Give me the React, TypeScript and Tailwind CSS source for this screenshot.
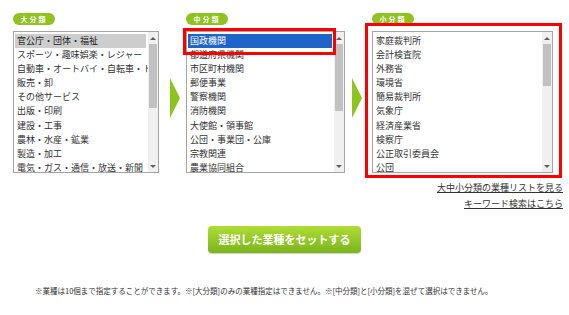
import React from 'react';

const big = [
  '官公庁・団体・福祉',
  'スポーツ・趣味娯楽・レジャー',
  '自動車・オートバイ・自転車・トラック',
  '販売・卸',
  'その他サービス',
  '出版・印刷',
  '建設・工事',
  '農林・水産・鉱業',
  '製造・加工',
  '電気・ガス・通信・放送・新聞',
];

const mid = [
  '国政機関',
  '都道府県機関',
  '市区町村機関',
  '郵便事業',
  '警察機関',
  '消防機関',
  '大使館・領事館',
  '公団・事業団・公庫',
  '宗教関連',
  '農業協同組合',
];

const small = [
  '家庭裁判所',
  '会計検査院',
  '外務省',
  '環境省',
  '簡易裁判所',
  '気象庁',
  '経済産業省',
  '検察庁',
  '公正取引委員会',
  '公団',
];

function Pill({ label }: { label: string }) {
  return (
    <div className="w-[42px] h-[12px] rounded-full bg-[#8fc31f] text-white text-[7px] font-bold tracking-[2px] flex items-center justify-center">
      {label}
    </div>
  );
}

function ScrollBar({ thumb }: { thumb: number }) {
  return (
    <div className="w-[10px] h-full flex flex-col bg-[#f0f0f0]">
      <div className="h-[12px] flex items-center justify-center">
        <div className="border-x-[3px] border-x-transparent border-b-[3px] border-b-[#606060]" />
      </div>
      <div className="mx-[1px] bg-[#c1c1c1]" style={{ height: thumb }} />
      <div className="flex-1" />
      <div className="h-[12px] flex items-center justify-center">
        <div className="border-x-[3px] border-x-transparent border-t-[3px] border-t-[#606060]" />
      </div>
    </div>
  );
}

function ListBox({
  label,
  items,
  width,
  thumb,
  selected,
}: {
  label: string;
  items: string[];
  width: number;
  thumb: number;
  selected?: 'grey' | 'blue';
}) {
  return (
    <div className="flex flex-col gap-[6px]">
      <Pill label={label} />
      <div
        className="h-[142px] border border-[#a5a5a5] bg-white flex"
        style={{ width }}
      >
        <div className="flex-1 min-w-0 overflow-hidden pt-[2px] pl-[1px] pr-[2px]">
          {items.map((item, i) => (
            <div
              key={item}
              className={
                'h-[14.1px] leading-[14px] px-[2px] whitespace-nowrap ' +
                (i === 0 && selected === 'grey'
                  ? 'bg-[#cdcdcd] text-[#222]'
                  : i === 0 && selected === 'blue'
                    ? 'bg-[#1f64c8] text-white'
                    : 'text-[#333]')
              }
            >
              {item}
            </div>
          ))}
        </div>
        <ScrollBar thumb={thumb} />
      </div>
    </div>
  );
}

function Arrow() {
  return (
    <div className="self-start mt-[65px] border-l-[10px] border-l-[#8fc31f] border-y-[20px] border-y-transparent" />
  );
}

export default function App() {
  return (
    <div
      className="relative w-[569px] h-[315px] bg-white text-[9px] text-[#333]"
      style={{ fontFamily: '"Noto Sans CJK JP", "Noto Sans", sans-serif' }}
    >
      <div className="flex items-start pl-[13px] pt-[13px]">
        <ListBox label="大分類" items={big} width={146} thumb={64} selected="grey" />
        <div className="ml-[11px] mr-[6px] flex">
          <Arrow />
        </div>
        <ListBox label="中分類" items={mid} width={159} thumb={67} selected="blue" />
        <div className="ml-[7px] mr-[10px] flex">
          <Arrow />
        </div>
        <ListBox label="小分類" items={small} width={181} thumb={42} />
      </div>

      <div className="flex flex-col items-end pr-[6px] mt-[9px] gap-[4px] leading-[12px]">
        <a className="underline text-[#333]">大中小分類の業種リストを見る</a>
        <a className="underline text-[#333]">キーワード検索はこちら</a>
      </div>

      <div className="flex justify-center mt-[16px]">
        <button className="w-[153px] h-[27px] rounded-[4px] bg-gradient-to-b from-[#b0dc35] to-[#7ab51b] text-white text-[11px] font-bold shadow-[0_1px_1px_rgba(0,0,0,0.2)]">
          選択した業種をセットする
        </button>
      </div>

      <div className="pl-[35px] mt-[33px] text-[7.5px] leading-[10px] text-[#333] whitespace-nowrap">
        ※業種は10個まで指定することができます。※[大分類]のみの業種指定はできません。※[中分類]と[小分類]を混ぜて選択はできません。
      </div>

      <div className="absolute left-[183px] top-[28px] w-[153px] h-[27px] border-[3px] border-[#f00]" />
      <div className="absolute left-[365px] top-[23px] w-[197px] h-[155px] border-[3px] border-[#f00]" />
    </div>
  );
}
